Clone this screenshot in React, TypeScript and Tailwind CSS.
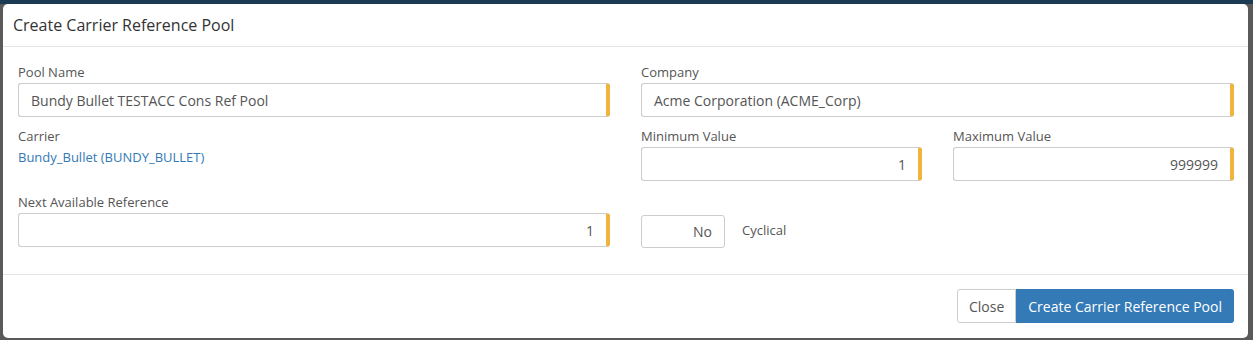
const font = { fontFamily: '"Open Sans", "Liberation Sans", sans-serif' };

function Field({ label, value, right = false, className = '' }: { label: string; value: string; right?: boolean; className?: string }) {
  return (
    <div className={className}>
      <div className="text-[13px] leading-[18px] text-[#555] mb-[2px]">{label}</div>
      <div
        className={`h-[34px] border border-[#ccc] border-r-[4px] border-r-[#f0b43c] rounded-[3px] flex items-center px-[12px] text-[14px] text-[#555] ${right ? 'justify-end' : ''}`}
      >
        {value}
      </div>
    </div>
  );
}

export default function App() {
  return (
    <div className="w-[1253px] h-[340px] bg-[#5a5a5a] relative overflow-hidden" style={font}>
      <div className="h-[4px] bg-[#1b3a54]" />
      <div className="absolute left-[3px] top-[4px] w-[1245px] h-[334px] bg-white rounded-[5px] flex flex-col">
        <div className="h-[43px] border-b border-[#e5e5e5] flex items-center px-[10px] text-[16px] text-[#333]">
          Create Carrier Reference Pool
        </div>
        <div className="px-[15px] pt-[16px] h-[228px] border-b border-[#e5e5e5]">
          <div className="grid grid-cols-[592px_593px] gap-x-[31px]">
            <div className="flex flex-col">
              <Field label="Pool Name" value="Bundy Bullet TESTACC Cons Ref Pool" />
              <div className="mt-[10px] text-[13px] leading-[18px] text-[#555]">Carrier</div>
              <div className="mt-[3px] text-[13px] leading-[18px] text-[#337ab7]">Bundy_Bullet (BUNDY_BULLET)</div>
              <Field className="mt-[27px]" label="Next Available Reference" value="1" right />
            </div>
            <div className="flex flex-col">
              <Field label="Company" value="Acme Corporation (ACME_Corp)" />
              <div className="mt-[10px] grid grid-cols-[281px_281px] gap-x-[31px]">
                <Field label="Minimum Value" value="1" right />
                <Field label="Maximum Value" value="999999" right />
              </div>
              <div className="mt-[34px] flex items-center gap-[17px]">
                <div className="w-[84px] h-[33px] border border-[#ccc] rounded-[3px] flex items-center justify-end px-[12px] text-[14px] text-[#555]">
                  No
                </div>
                <div className="text-[13px] text-[#555] -mt-[2px]">Cyclical</div>
              </div>
            </div>
          </div>
        </div>
        <div className="flex-1 flex items-center justify-end pr-[14px] pb-[1px]">
          <div className="flex">
            <button className="h-[34px] px-[11px] border border-[#ccc] rounded-l-[3px] text-[14px] text-[#555] bg-white">
              Close
            </button>
            <button className="h-[34px] px-[12px] rounded-r-[3px] text-[14px] text-white bg-[#337ab7]">
              Create Carrier Reference Pool
            </button>
          </div>
        </div>
      </div>
    </div>
  );
}
